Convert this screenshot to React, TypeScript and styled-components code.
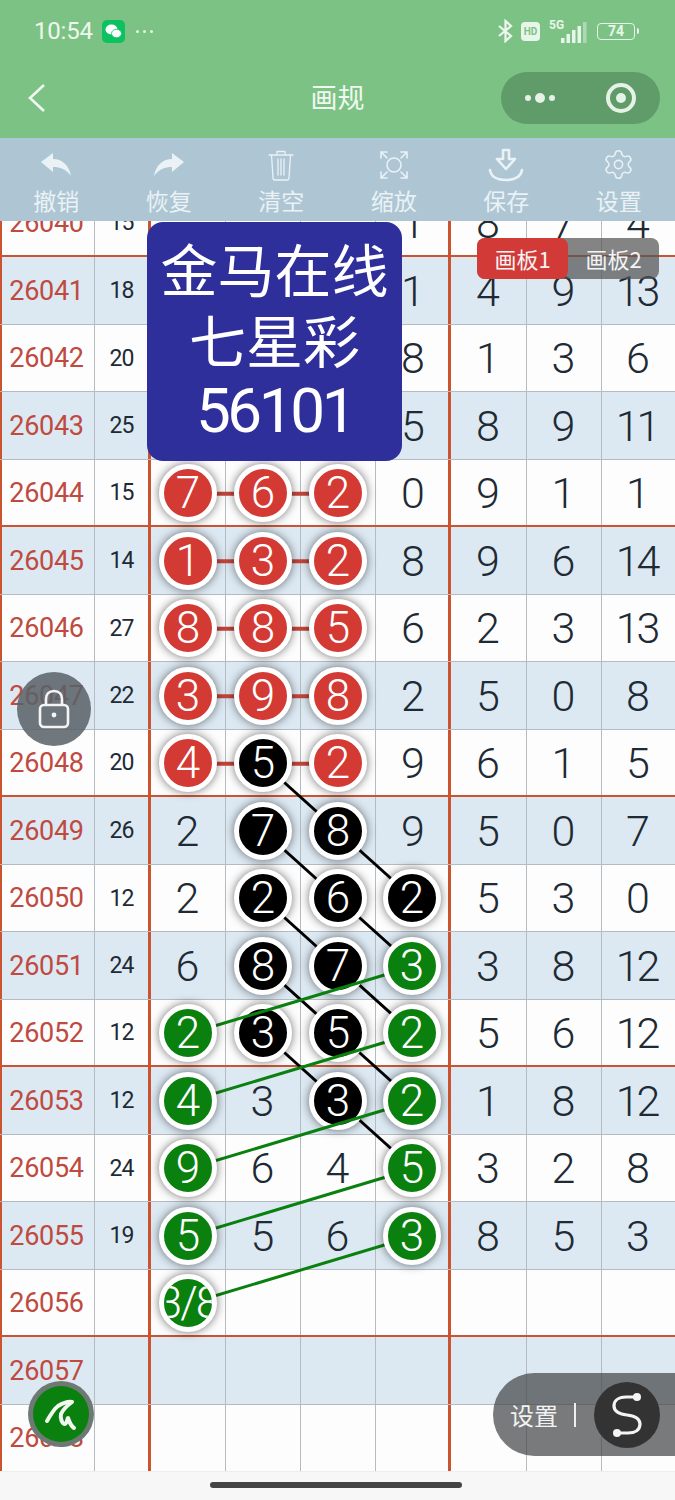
import React from "react";
import styled, { createGlobalStyle } from "styled-components";
import { Settings } from "lucide-react";

const CJK = `"Noto Sans CJK SC", "Noto Sans", sans-serif`;
const NUM = `Roboto, "Liberation Sans", sans-serif`;
const ROW_H = 67.5;
const FIRST_ROW_BOTTOM = 36.5;
const COL_X = [188.5, 263.5, 338.5, 413.5];

const Global = createGlobalStyle`
  html, body { margin: 0; padding: 0; background: #fff; }
  * { box-sizing: border-box; }
`;

const Page = styled.div`
  width: 675px;
  height: 1500px;
  display: flex;
  flex-direction: column;
  overflow: hidden;
  font-family: ${CJK};
`;

const Header = styled.header`
  background: #7dc285;
  height: 138px;
  padding-bottom: 4px;
  flex: none;
`;

const StatusBar = styled.div`
  height: 62px;
  padding: 0 40px 0 34px;
  display: flex;
  align-items: center;
  color: #eef7ee;
`;

const Time = styled.span`
  font: 400 24px ${NUM};
  letter-spacing: -0.2px;
  width: 68px;
`;

const WeChat = styled.span`
  width: 23px;
  height: 23px;
  background: #0cc160;
  border-radius: 5px;
  display: flex;
  align-items: center;
  justify-content: center;
`;

const StatusDots = styled.span`
  margin-left: 11px;
  display: flex;
  gap: 4px;
  & > i {
    width: 3px;
    height: 3px;
    border-radius: 50%;
    background: #e4f3e4;
  }
`;

const StatusRight = styled.div`
  margin-left: auto;
  display: flex;
  align-items: center;
`;

const HdBadge = styled.span`
  width: 19px;
  height: 19px;
  margin: 0 9px 0 8px;
  border-radius: 4px;
  background: #e8f5ea;
  color: #7dc285;
  font: 700 10px ${NUM};
  display: flex;
  align-items: center;
  justify-content: center;
`;

const Battery = styled.span`
  width: 38px;
  height: 17px;
  margin-left: 9px;
  border: 1.5px solid #e8f5ea;
  border-radius: 4px;
  color: #e8f5ea;
  font: 700 14px ${NUM};
  display: flex;
  align-items: center;
  justify-content: center;
  position: relative;
  &::after {
    content: "";
    position: absolute;
    right: -5px;
    top: 4px;
    width: 2px;
    height: 6px;
    border-radius: 0 2px 2px 0;
    background: #e8f5ea;
  }
`;

const Nav = styled.div`
  height: 72px;
  padding: 0 15px;
  display: grid;
  grid-template-columns: 1fr auto 1fr;
  align-items: center;
`;

const Back = styled.svg`
  margin-left: 12px;
  display: block;
`;

const Title = styled.h1`
  margin: -4px 0 0;
  color: #f0f8f0;
  font: 400 27px ${CJK};
`;

const Capsule = styled.div`
  justify-self: end;
  width: 159px;
  height: 52px;
  border-radius: 26px;
  background: #5f9c69;
  display: flex;
  align-items: center;
  padding: 0 24px 0 24px;
  justify-content: space-between;
`;

const CapsuleDots = styled.span`
  display: flex;
  align-items: center;
  gap: 4px;
`;

const CapsuleDot = styled.i<{ $big?: boolean }>`
  width: ${(p) => (p.$big ? 10 : 6)}px;
  height: ${(p) => (p.$big ? 10 : 6)}px;
  border-radius: 50%;
  background: #e6f2e6;
`;

const Target = styled.span`
  width: 30px;
  height: 30px;
  border-radius: 50%;
  border: 4px solid #e6f2e6;
  display: flex;
  align-items: center;
  justify-content: center;
  &::after {
    content: "";
    width: 10px;
    height: 10px;
    border-radius: 50%;
    background: #e6f2e6;
  }
`;

const Toolbar = styled.nav`
  height: 83px;
  flex: none;
  background: #aec6d3;
  display: grid;
  grid-template-columns: repeat(6, 1fr);
  position: relative;
  z-index: 5;
`;

const Tool = styled.div`
  display: flex;
  flex-direction: column;
  align-items: center;
  padding-top: 8px;
  color: #eaf2f6;
`;

const ToolIcon = styled.span`
  height: 37px;
  display: flex;
  align-items: center;
  justify-content: center;
`;

const ToolLabel = styled.span`
  font: 400 23px/32px ${CJK};
  margin-top: 1px;
`;

const Board = styled.main`
  position: relative;
  height: 1250px;
  flex: none;
  overflow: hidden;
  background: #fdfdfd;
`;

const Table = styled.div`
  margin-top: -31.5px;
`;

const Row = styled.div<{ $shaded: boolean; $sep: boolean }>`
  height: ${ROW_H}px;
  display: grid;
  grid-template-columns: 95px 56px 75px 75px 75px 75px 76px 75px 73px;
  background: ${(p) => (p.$shaded ? "#dce8f2" : "#fdfdfd")};
  border-bottom: ${(p) => (p.$sep ? "2px solid #c9542f" : "1px solid #b4bcc2")};
`;

const Cell = styled.div<{ $red?: boolean; $last?: boolean }>`
  display: flex;
  align-items: center;
  justify-content: center;
  padding-top: 1px;
  border-right: ${(p) =>
    p.$last ? "none" : p.$red ? "3px solid #c9542f" : "1px solid #b4bcc2"};
`;

const IssueCell = styled(Cell)`
  border-left: 2px solid #c9542f;
  padding-right: 3px;
  color: #bf4a3f;
  font: 400 27px ${NUM};
  letter-spacing: -0.3px;
`;

const SumCell = styled(Cell)`
  color: #1e2a34;
  font: 400 23px ${NUM};
  letter-spacing: -1px;
`;

const Digit = styled(Cell)<{ $ball?: boolean }>`
  color: #1e2a34;
  font: 300 43px ${NUM};
  letter-spacing: -3px;
  padding-right: ${(p) => (p.$ball ? 0 : p.$red ? 1 : 4)}px;
`;

type Tone = "red" | "black" | "green";

const toneColor: Record<Tone, string> = {
  red: "#d23a33",
  black: "#000",
  green: "#0a800f",
};

const Ball = styled.span<{ $tone: Tone; $small?: boolean }>`
  position: relative;
  z-index: ${(p) => (p.$tone === "green" ? 4 : 2)};
  width: 58px;
  height: 58px;
  flex: none;
  border-radius: 50%;
  background: ${(p) => toneColor[p.$tone]};
  border: 5px solid #fff;
  box-shadow: 0 0 10px rgba(0, 0, 0, 0.55);
  color: #fff;
  display: flex;
  align-items: center;
  justify-content: center;
  overflow: hidden;
  white-space: nowrap;
  font: 300 44px ${NUM};
  letter-spacing: ${(p) => (p.$small ? "-2px" : "0")};
`;

const Links = styled.svg<{ $z: number }>`
  position: absolute;
  left: 0;
  top: 0;
  z-index: ${(p) => p.$z};
  pointer-events: none;
`;

const Panel = styled.div`
  position: absolute;
  z-index: 6;
  left: 147px;
  top: 1px;
  width: 255px;
  height: 239px;
  border-radius: 16px;
  background: #2f2f9c;
  color: #fff;
  text-align: center;
  padding-top: 10px;
  font: 400 57px/71px ${CJK};
`;

const PanelNumber = styled.div`
  margin-top: 2px;
  font: 400 62px/70px ${NUM};
  letter-spacing: -3.4px;
`;

const Tabs = styled.div`
  position: absolute;
  z-index: 6;
  left: 477px;
  top: 17px;
  display: flex;
  border-radius: 8px;
  background: rgba(85, 85, 85, 0.72);
`;

const TabItem = styled.div<{ $active?: boolean }>`
  width: 91px;
  height: 41px;
  border-radius: 8px;
  background: ${(p) => (p.$active ? "#d23a38" : "transparent")};
  color: #f4f4f4;
  font: 400 22px/41px ${CJK};
  text-align: center;
`;

const LockButton = styled.div`
  position: absolute;
  z-index: 6;
  left: 17px;
  top: 451px;
  width: 74px;
  height: 74px;
  border-radius: 50%;
  background: rgba(88, 98, 104, 0.86);
  display: flex;
  align-items: center;
  justify-content: center;
`;

const PenButton = styled.div`
  position: absolute;
  z-index: 6;
  left: 28px;
  top: 1160px;
  width: 66px;
  height: 66px;
  border-radius: 50%;
  background: #0a800f;
  border: 5px solid rgba(115, 120, 120, 0.95);
  display: flex;
  align-items: center;
  justify-content: center;
`;

const SettingsPill = styled.div`
  position: absolute;
  z-index: 6;
  left: 493px;
  right: 0;
  top: 1152px;
  height: 83px;
  border-radius: 42px 0 0 42px;
  background: rgba(68, 70, 72, 0.72);
  display: flex;
  align-items: center;
  padding-left: 17px;
  color: #f2f2f2;
  font: 400 24px ${CJK};
`;

const PillRule = styled.i`
  width: 2px;
  height: 24px;
  background: #eee;
  margin: 0 18px 0 16px;
`;

const PillCircle = styled.span`
  width: 66px;
  height: 66px;
  border-radius: 50%;
  background: #333;
  display: flex;
  align-items: center;
  justify-content: center;
`;

const HomeBar = styled.footer`
  height: 29px;
  flex: none;
  background: #f7f7f7;
  border-top: 1px solid #eee;
  padding-top: 10px;
  display: flex;
  justify-content: center;
`;

const HomeHandle = styled.i`
  width: 252px;
  height: 6px;
  margin-right: 3px;
  border-radius: 3px;
  background: #444;
`;

type CellValue = number | string | null | [Tone, number | string];
const R = (n: number): CellValue => ["red", n];
const K = (n: number): CellValue => ["black", n];
const G = (n: number | string): CellValue => ["green", n];

const rows: { id: number; sum: number | null; cells: CellValue[] }[] = [
  { id: 26040, sum: 15, cells: [null, null, null, 1, 8, 7, 4] },
  { id: 26041, sum: 18, cells: [null, null, null, 1, 4, 9, 13] },
  { id: 26042, sum: 20, cells: [null, null, null, 8, 1, 3, 6] },
  { id: 26043, sum: 25, cells: [null, null, null, 5, 8, 9, 11] },
  { id: 26044, sum: 15, cells: [R(7), R(6), R(2), 0, 9, 1, 1] },
  { id: 26045, sum: 14, cells: [R(1), R(3), R(2), 8, 9, 6, 14] },
  { id: 26046, sum: 27, cells: [R(8), R(8), R(5), 6, 2, 3, 13] },
  { id: 26047, sum: 22, cells: [R(3), R(9), R(8), 2, 5, 0, 8] },
  { id: 26048, sum: 20, cells: [R(4), K(5), R(2), 9, 6, 1, 5] },
  { id: 26049, sum: 26, cells: [2, K(7), K(8), 9, 5, 0, 7] },
  { id: 26050, sum: 12, cells: [2, K(2), K(6), K(2), 5, 3, 0] },
  { id: 26051, sum: 24, cells: [6, K(8), K(7), G(3), 3, 8, 12] },
  { id: 26052, sum: 12, cells: [G(2), K(3), K(5), G(2), 5, 6, 12] },
  { id: 26053, sum: 12, cells: [G(4), 3, K(3), G(2), 1, 8, 12] },
  { id: 26054, sum: 24, cells: [G(9), 6, 4, G(5), 3, 2, 8] },
  { id: 26055, sum: 19, cells: [G(5), 5, 6, G(3), 8, 5, 3] },
  { id: 26056, sum: null, cells: [G("3/8"), null, null, null, null, null, null] },
  { id: 26057, sum: null, cells: [null, null, null, null, null, null, null] },
  { id: 26058, sum: null, cells: [null, null, null, null, null, null, null] },
];

const cy = (id: number) => FIRST_ROW_BOTTOM + ROW_H * (id - 26041) + ROW_H / 2;
type Link = [number, number, number, number];

const redLinks: Link[] = [26044, 26045, 26046, 26047, 26048].map((id) => [id, 0, id, 2]);
const blackLinks: Link[] = [
  [26048, 1, 26049, 2],
  [26049, 1, 26050, 2],
  [26049, 2, 26050, 3],
  [26050, 1, 26051, 2],
  [26050, 2, 26051, 3],
  [26051, 1, 26052, 2],
  [26051, 2, 26052, 3],
  [26052, 1, 26053, 2],
  [26052, 2, 26053, 3],
  [26053, 2, 26054, 3],
];
const greenLinks: Link[] = [
  [26052, 0, 26051, 3],
  [26053, 0, 26052, 3],
  [26054, 0, 26053, 3],
  [26055, 0, 26054, 3],
  [26056, 0, 26055, 3],
];

const LinkLayer = ({ links, color, width, z }: { links: Link[]; color: string; width: number; z: number }) => (
  <Links $z={z} width={675} height={1250}>
    {links.map(([r1, c1, r2, c2], i) => (
      <line key={i} x1={COL_X[c1]} y1={cy(r1)} x2={COL_X[c2]} y2={cy(r2)} stroke={color} strokeWidth={width} />
    ))}
  </Links>
);

const tools = [
  {
    label: "撤销",
    icon: (
      <svg width="32" height="26" viewBox="0 0 32 26" fill="currentColor">
        <path d="M1 10 L13 1 V7 C22 7 29 13 31 24 C26 17 20 15 13 15 V20 Z" />
      </svg>
    ),
  },
  {
    label: "恢复",
    icon: (
      <svg width="32" height="26" viewBox="0 0 32 26" fill="currentColor">
        <path d="M31 10 L19 1 V7 C10 7 3 13 1 24 C6 17 12 15 19 15 V20 Z" />
      </svg>
    ),
  },
  {
    label: "清空",
    icon: (
      <svg width="26" height="32" viewBox="0 0 26 32" fill="none" stroke="currentColor" strokeWidth="1.3" strokeLinecap="round" strokeLinejoin="round">
        <path d="M1 6 H25 M9 6 V2.5 H17 V6 M3.5 6 L5 29 Q5 31 7 31 H19 Q21 31 21 29 L22.5 6 M10 10 V26 M13 10 V26 M16 10 V26" />
      </svg>
    ),
  },
  {
    label: "缩放",
    icon: (
      <svg width="30" height="30" viewBox="0 0 30 30" fill="none" stroke="currentColor" strokeWidth="1.6" strokeLinecap="round">
        <circle cx="15" cy="15" r="7" />
        <path d="M2 8 V2 H8 M2 2 L8 8 M22 2 H28 V8 M28 2 L22 8 M2 22 V28 H8 M2 28 L8 22 M28 22 V28 H22 M28 28 L22 22" />
      </svg>
    ),
  },
  {
    label: "保存",
    icon: (
      <svg width="36" height="36" viewBox="0 0 36 36" fill="none" stroke="currentColor" strokeWidth="2.6" strokeLinecap="round" strokeLinejoin="round">
        <path d="M15 3 H21 V12 H27 L18 22 L9 12 H15 Z" />
        <path d="M2 23 C3 30 10 33 18 33 C26 33 33 30 34 23" />
      </svg>
    ),
  },
  { label: "设置", icon: <Settings size={33} strokeWidth={1.1} /> },
];

export default function App() {
  return (
    <Page>
      <Global />
      <Header>
        <StatusBar>
          <Time>10:54</Time>
          <WeChat>
            <svg width="17" height="15" viewBox="0 0 17 15" fill="#fff">
              <ellipse cx="6.5" cy="5.5" rx="6" ry="5" />
              <ellipse cx="11.5" cy="9.5" rx="5" ry="4.2" stroke="#0cc160" strokeWidth="0.8" />
            </svg>
          </WeChat>
          <StatusDots>
            <i />
            <i />
            <i />
          </StatusDots>
          <StatusRight>
            <svg width="15" height="24" viewBox="0 0 15 24" fill="none" stroke="#eef7ee" strokeWidth="2.2">
              <path d="M1 7 L13 17 L7.5 22 V2 L13 7 L1 17" />
            </svg>
            <HdBadge>HD</HdBadge>
            <svg width="39" height="26" viewBox="0 0 39 26" fill="#e8f5ea">
              <text x="0" y="11" fontFamily="Roboto, sans-serif" fontSize="12" fontWeight="700">5G</text>
              <rect x="12" y="20" width="3.5" height="5" />
              <rect x="17.5" y="16" width="3.5" height="9" />
              <rect x="23" y="12" width="3.5" height="13" />
              <rect x="28.5" y="8" width="3.5" height="17" />
              <rect x="34" y="4" width="3.5" height="21" opacity="0.45" />
            </svg>
            <Battery>74</Battery>
          </StatusRight>
        </StatusBar>
        <Nav>
          <Back width="20" height="30" viewBox="0 0 20 30" fill="none" stroke="#f0f8f0" strokeWidth="2.6">
            <path d="M17 2 L3 15 L17 28" />
          </Back>
          <Title>画规</Title>
          <Capsule>
            <CapsuleDots>
              <CapsuleDot />
              <CapsuleDot $big />
              <CapsuleDot />
            </CapsuleDots>
            <Target />
          </Capsule>
        </Nav>
      </Header>

      <Toolbar>
        {tools.map((t) => (
          <Tool key={t.label}>
            <ToolIcon>{t.icon}</ToolIcon>
            <ToolLabel>{t.label}</ToolLabel>
          </Tool>
        ))}
      </Toolbar>

      <Board>
        <Table>
          {rows.map((r, i) => (
            <Row key={r.id} $shaded={i % 2 === 1} $sep={(r.id - 26040) % 4 === 0}>
              <IssueCell>{r.id}</IssueCell>
              <SumCell $red>{r.sum}</SumCell>
              {r.cells.map((c, j) => (
                <Digit key={j} $red={j === 3} $last={j === 6} $ball={Array.isArray(c)}>
                  {Array.isArray(c) ? (
                    <Ball $tone={c[0]} $small={typeof c[1] === "string"}>
                      {c[1]}
                    </Ball>
                  ) : (
                    c
                  )}
                </Digit>
              ))}
            </Row>
          ))}
        </Table>
        <LinkLayer links={redLinks} color="#c4463c" width={4} z={1} />
        <LinkLayer links={blackLinks} color="#000" width={3} z={1} />
        <LinkLayer links={greenLinks} color="#0a800f" width={3} z={3} />

        <Panel>
          金马在线
          <br />
          七星彩
          <PanelNumber>56101</PanelNumber>
        </Panel>

        <Tabs>
          <TabItem $active>画板1</TabItem>
          <TabItem>画板2</TabItem>
        </Tabs>

        <LockButton>
          <svg width="32" height="40" viewBox="0 0 32 40" fill="none" stroke="#f4f4f4" strokeWidth="2.6">
            <rect x="2" y="16" width="28" height="22" rx="4" />
            <path d="M8 16 V10 C8 5 11 2 16 2 C21 2 24 5 24 10 V16" />
            <circle cx="16" cy="26" r="2.4" fill="#f4f4f4" stroke="none" />
          </svg>
        </LockButton>

        <PenButton>
          <svg width="36" height="34" viewBox="0 0 36 34" fill="none" stroke="#f0f8f0" strokeWidth="4" strokeLinecap="round" strokeLinejoin="round">
            <path d="M4 24 C8 17 11 12 15 9 C20 6 25 4 29 5 C25 8 20 12 18 17 C17 21 19 27 22 27 C24 27 24 22 25 21 C26 24 28 29 31 31" />
          </svg>
        </PenButton>

        <SettingsPill>
          设置
          <PillRule />
          <PillCircle>
            <svg width="36" height="48" viewBox="0 0 36 48" fill="none" stroke="#f4f4f4" strokeWidth="3.2" strokeLinecap="round">
              <path d="M28 6 H17 C9 6 5 10 5 15 C5 21 10 23 18 24 C26 25 31 28 31 33 C31 39 26 42 19 42 H8" />
              <circle cx="28" cy="6" r="4" fill="#f4f4f4" stroke="none" />
              <circle cx="8" cy="42" r="4" fill="#f4f4f4" stroke="none" />
            </svg>
          </PillCircle>
        </SettingsPill>
      </Board>

      <HomeBar>
        <HomeHandle />
      </HomeBar>
    </Page>
  );
}
